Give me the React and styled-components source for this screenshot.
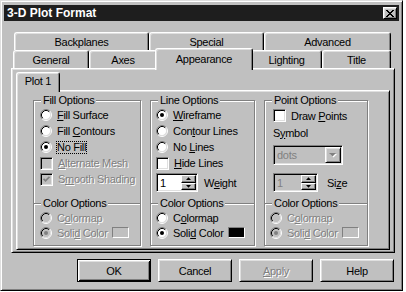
import React from "react";
import styled, { createGlobalStyle, css } from "styled-components";

const Global = createGlobalStyle`
  html, body { margin: 0; padding: 0; background: #ffffff; }
  body {
    font-family: "Liberation Sans", Arial, sans-serif;
    font-size: 11px;
    letter-spacing: -0.3px;
    color: #000;
  }
  * { box-sizing: border-box; }
`;

const raised = css`
  border: 1px solid;
  border-color: #fff #000 #000 #fff;
  box-shadow: inset 1px 1px 0 #dfdfdf, inset -1px -1px 0 #808080;
`;

const sunken = css`
  border: 1px solid;
  border-color: #808080 #fff #fff #808080;
  box-shadow: inset 1px 1px 0 #000, inset -1px -1px 0 #dfdfdf;
`;

const Window = styled.div`
  width: 403px;
  height: 291px;
  background: #c0c0c0;
  border: 1px solid;
  border-color: #dfdfdf #000 #000 #dfdfdf;
  box-shadow: inset 1px 1px 0 #fff, inset -1px -1px 0 #808080;
  padding: 4px 3px 3px 3px;
  display: flex;
  flex-direction: column;
`;

const TitleBar = styled.div`
  height: 16px;
  background: #1e1e1e;
  display: flex;
  align-items: center;
  justify-content: space-between;
`;

const TitleText = styled.span`
  color: #fff;
  font-weight: bold;
  font-size: 12px;
  letter-spacing: 0;
  padding-left: 3px;
`;

const CloseBtn = styled.div`
  width: 14px;
  height: 12px;
  margin-right: 2px;
  background: #c0c0c0;
  ${raised};
  display: flex;
  align-items: center;
  justify-content: center;
`;

const Body = styled.div`
  padding: 11px 4px 0 7px;
  display: flex;
  flex-direction: column;
`;

const TabRow = styled.div`
  display: flex;
  height: ${(p) => p.$h}px;
  padding-left: ${(p) => p.$pl}px;
`;

const Tab = styled.div`
  flex: none;
  width: ${(p) => p.$w}px;
  height: ${(p) => p.$h}px;
  background: #c0c0c0;
  border: 1px solid;
  border-color: #fff #000 transparent #fff;
  border-bottom: none;
  border-radius: 3px 3px 0 0;
  box-shadow: inset 1px 1px 0 #dfdfdf, inset -1px 0 0 #808080;
  display: flex;
  align-items: center;
  justify-content: center;
  white-space: nowrap;
  ${(p) =>
    p.$sel &&
    css`
      position: relative;
      z-index: 1;
      width: ${p.$w + 4}px;
      height: ${p.$h + 4}px;
      margin: -2px -2px -2px -2px;
      padding-bottom: ${p.$pb}px;
    `}
`;

const Panel = styled.div`
  background: #c0c0c0;
  border: 1px solid;
  border-color: #fff #000 #000 #fff;
  box-shadow: inset 1px 1px 0 #dfdfdf, inset -1px -1px 0 #808080;
`;

const OuterPanel = styled(Panel)`
  padding: 5px 4px 2px 4px;
`;

const InnerPanel = styled(Panel)`
  height: 160px;
  padding: 9px 0 0 16px;
  display: flex;
  gap: 9px;
  align-items: flex-start;
`;

const Group = styled.div`
  flex: none;
  width: ${(p) => p.$w}px;
  border: 1px solid #808080;
  box-shadow: inset 1px 1px 0 #fff, 1px 1px 0 #fff;
  display: flex;
  flex-direction: column;
`;

const TopSection = styled.div`
  position: relative;
  height: 102px;
  padding: 6px 0 0 ${(p) => p.$pl}px;
  display: flex;
  flex-direction: column;
  align-items: flex-start;
`;

const ColorSection = styled.div`
  position: relative;
  border-top: 1px solid #808080;
  box-shadow: inset 0 1px 0 #fff;
  padding: 6px 0 5px ${(p) => p.$pl}px;
  display: flex;
  flex-direction: column;
`;

const Legend = styled.span`
  position: absolute;
  top: -7px;
  left: 7px;
  padding: 0 2px;
  background: #c0c0c0;
  line-height: 13px;
  white-space: nowrap;
`;

const Row = styled.div`
  height: ${(p) => p.$h}px;
  margin-top: ${(p) => p.$mt || 0}px;
  display: flex;
  align-items: center;
  white-space: nowrap;
`;

const Label = styled.span`
  margin-left: ${(p) => (p.$ml === undefined ? 5 : p.$ml)}px;
  white-space: nowrap;
  color: ${(p) => (p.$disabled ? "#808080" : "#000")};
  text-shadow: ${(p) => (p.$disabled ? "1px 1px 0 #fff" : "none")};
`;

const Focus = styled.span`
  display: inline-block;
  line-height: 11px;
  outline: 1px dotted #000;
`;

const RadioSvg = styled.svg`
  flex: none;
`;

const CheckBox = styled.span`
  flex: none;
  width: 13px;
  height: 13px;
  ${sunken};
  background: ${(p) => (p.$disabled ? "#c0c0c0" : "#fff")};
  display: flex;
  align-items: center;
  justify-content: center;
`;

const Swatch = styled.span`
  flex: none;
  width: 17px;
  height: 11px;
  margin-left: 4px;
  border: 1px solid;
  border-color: #808080 #fff #fff #808080;
  background: ${(p) => p.$color};
`;

const Field = styled.div`
  flex: none;
  width: ${(p) => p.$w}px;
  height: ${(p) => p.$h}px;
  ${sunken};
  padding: 1px;
  background: ${(p) => (p.$disabled ? "#c0c0c0" : "#fff")};
  display: flex;
  align-items: stretch;
`;

const FieldText = styled.span`
  flex: 1;
  padding-left: 2px;
  display: flex;
  align-items: center;
  color: ${(p) => (p.$disabled ? "#808080" : "#000")};
`;

const SpinCol = styled.div`
  width: 15px;
  display: flex;
  flex-direction: column;
`;

const SpinBtn = styled.div`
  flex: 1;
  background: #c0c0c0;
  border: 1px solid;
  border-color: #fff #000 #000 #fff;
  box-shadow: inset -1px -1px 0 #808080;
  display: flex;
  align-items: center;
  justify-content: center;
`;

const DropBtn = styled.div`
  width: 16px;
  background: #c0c0c0;
  ${raised};
  display: flex;
  align-items: center;
  justify-content: center;
`;

const ButtonRow = styled.div`
  margin-top: 6px;
  padding-right: 1px;
  display: flex;
  justify-content: flex-end;
  gap: 7px;
`;

const Button = styled.div`
  width: 74px;
  height: 23px;
  background: #c0c0c0;
  display: flex;
  align-items: center;
  justify-content: center;
  color: ${(p) => (p.$disabled ? "#808080" : "#000")};
  text-shadow: ${(p) => (p.$disabled ? "1px 1px 0 #fff" : "none")};
  ${(p) =>
    p.$default
      ? css`
          border: 1px solid #000;
          box-shadow: inset 1px 1px 0 #fff, inset -1px -1px 0 #000,
            inset 2px 2px 0 #dfdfdf, inset -2px -2px 0 #808080;
        `
      : raised}
`;

const Radio = ({ checked, disabled }) => (
  <RadioSvg width="12" height="12" viewBox="0 0 12 12">
    <circle cx="6" cy="6" r="4.5" fill={disabled ? "#c0c0c0" : "#fff"} />
    <path d="M2.11 9.89 A5.5 5.5 0 0 1 9.89 2.11" fill="none" stroke="#808080" />
    <path d="M9.89 2.11 A5.5 5.5 0 0 1 2.11 9.89" fill="none" stroke="#fff" />
    <path d="M2.82 9.18 A4.5 4.5 0 0 1 9.18 2.82" fill="none" stroke="#000" />
    <path d="M9.18 2.82 A4.5 4.5 0 0 1 2.82 9.18" fill="none" stroke="#dfdfdf" />
    {checked && <circle cx="6" cy="6" r="2" fill={disabled ? "#808080" : "#000"} />}
  </RadioSvg>
);

const Check = ({ checked, disabled }) => (
  <CheckBox $disabled={disabled}>
    {checked && (
      <svg width="7" height="7" viewBox="0 0 7 7">
        <path d="M0.5 2.8 L2.5 4.8 L6.5 0.8" fill="none" stroke={disabled ? "#808080" : "#000"} strokeWidth="1.8" />
      </svg>
    )}
  </CheckBox>
);

const Arrow = ({ up }) => (
  <svg width="5" height="3" viewBox="0 0 5 3">
    <polygon points={up ? "0,3 5,3 2.5,0.2" : "0,0 5,0 2.5,2.8"} fill="#000" />
  </svg>
);

const Spinner = ({ w, disabled }) => (
  <Field $w={w} $h={19} $disabled={disabled}>
    <FieldText $disabled={disabled}>1</FieldText>
    <SpinCol>
      <SpinBtn>
        <Arrow up />
      </SpinBtn>
      <SpinBtn>
        <Arrow />
      </SpinBtn>
    </SpinCol>
  </Field>
);

const CloseGlyph = () => (
  <svg width="8" height="7" viewBox="0 0 8 7">
    <path
      d="M0 0h2v1h1v1h2V1h1V0h2v1H7v1H6v1H5v1h1v1h1v1h1v1H6V6H5V5H3v1H2v1H0V6h1V5h1V4h1V3H2V2H1V1H0z"
      fill="#000"
    />
  </svg>
);

const OptRadio = ({ children, checked, disabled, h = 16 }) => (
  <Row $h={h}>
    <Radio checked={checked} disabled={disabled} />
    <Label $disabled={disabled}>{children}</Label>
  </Row>
);

const OptCheck = ({ children, checked, disabled, h = 16 }) => (
  <Row $h={h}>
    <Check checked={checked} disabled={disabled} />
    <Label $disabled={disabled}>{children}</Label>
  </Row>
);

const ColorOptions = ({ disabled, swatch, pl }) => (
  <ColorSection $pl={pl}>
    <Legend>Color Options</Legend>
    <OptRadio h={15} disabled={disabled}>
      C<u>o</u>lormap
    </OptRadio>
    <Row $h={15}>
      <Radio checked disabled={disabled} />
      <Label $disabled={disabled}>
        Soli<u>d</u> Color
      </Label>
      <Swatch $color={swatch} />
    </Row>
  </ColorSection>
);

const backTabs = [
  { name: "Backplanes", w: 135 },
  { name: "Special", w: 115 },
  { name: "Advanced", w: 127 },
];
const frontTabs = [
  { name: "General", w: 76 },
  { name: "Axes", w: 68 },
  { name: "Appearance", w: 94, sel: true },
  { name: "Lighting", w: 71 },
  { name: "Title", w: 69 },
];

export default function App() {
  return (
    <>
      <Global />
      <Window>
        <TitleBar>
          <TitleText>3-D Plot Format</TitleText>
          <CloseBtn>
            <CloseGlyph />
          </CloseBtn>
        </TitleBar>
        <Body>
          <TabRow $h={18} $pl={3}>
            {backTabs.map((t) => (
              <Tab key={t.name} $w={t.w} $h={18}>
                {t.name}
              </Tab>
            ))}
          </TabRow>
          <TabRow $h={18} $pl={2}>
            {frontTabs.map((t) => (
              <Tab key={t.name} $w={t.w} $h={18} $sel={t.sel} $pb={2}>
                {t.name}
              </Tab>
            ))}
          </TabRow>
          <OuterPanel>
            <TabRow $h={16} $pl={2}>
              <Tab $w={40} $h={16} $sel $pb={4}>
                Plot 1
              </Tab>
            </TabRow>
            <InnerPanel>
              <Group $w={108}>
                <TopSection $pl={6}>
                  <Legend>Fill Options</Legend>
                  <OptRadio>
                    <u>F</u>ill Surface
                  </OptRadio>
                  <OptRadio>
                    Fill <u>C</u>ontours
                  </OptRadio>
                  <Row $h={16}>
                    <Radio checked />
                    <Label>
                      <Focus>No Fill</Focus>
                    </Label>
                  </Row>
                  <OptCheck disabled>
                    <u>A</u>lternate Mesh
                  </OptCheck>
                  <OptCheck disabled checked>
                    S<u>m</u>ooth Shading
                  </OptCheck>
                </TopSection>
                <ColorOptions disabled swatch="#c0c0c0" pl={6} />
              </Group>

              <Group $w={105}>
                <TopSection $pl={5}>
                  <Legend>Line Options</Legend>
                  <OptRadio checked>
                    <u>W</u>ireframe
                  </OptRadio>
                  <OptRadio>
                    Con<u>t</u>our Lines
                  </OptRadio>
                  <OptRadio>
                    No <u>L</u>ines
                  </OptRadio>
                  <OptCheck>
                    <u>H</u>ide Lines
                  </OptCheck>
                  <Row $h={19} $mt={2}>
                    <Spinner w={42} />
                    <Label $ml={6}>
                      W<u>e</u>ight
                    </Label>
                  </Row>
                </TopSection>
                <ColorOptions swatch="#000" pl={5} />
              </Group>

              <Group $w={104}>
                <TopSection $pl={8}>
                  <Legend>Point Options</Legend>
                  <OptCheck h={17}>
                    Draw <u>P</u>oints
                  </OptCheck>
                  <Row $h={17}>
                    <Label $ml={0}>
                      S<u>y</u>mbol
                    </Label>
                  </Row>
                  <Row $h={20} $mt={4}>
                    <Field $w={70} $h={20} $disabled>
                      <FieldText $disabled>dots</FieldText>
                      <DropBtn>
                        <svg width="8" height="5" viewBox="0 0 8 5">
                          <polygon points="1,1 8,1 4.5,4.5" fill="#fff" />
                          <polygon points="0,0 7,0 3.5,3.5" fill="#808080" />
                        </svg>
                      </DropBtn>
                    </Field>
                  </Row>
                  <Row $h={19} $mt={8}>
                    <Spinner w={45} disabled />
                    <Label $ml={9}>
                      Si<u>z</u>e
                    </Label>
                  </Row>
                </TopSection>
                <ColorOptions disabled swatch="#c0c0c0" pl={5} />
              </Group>
            </InnerPanel>
          </OuterPanel>
          <ButtonRow>
            <Button $default>OK</Button>
            <Button>Cancel</Button>
            <Button $disabled>
              <u>A</u>pply
            </Button>
            <Button>Help</Button>
          </ButtonRow>
        </Body>
      </Window>
    </>
  );
}
